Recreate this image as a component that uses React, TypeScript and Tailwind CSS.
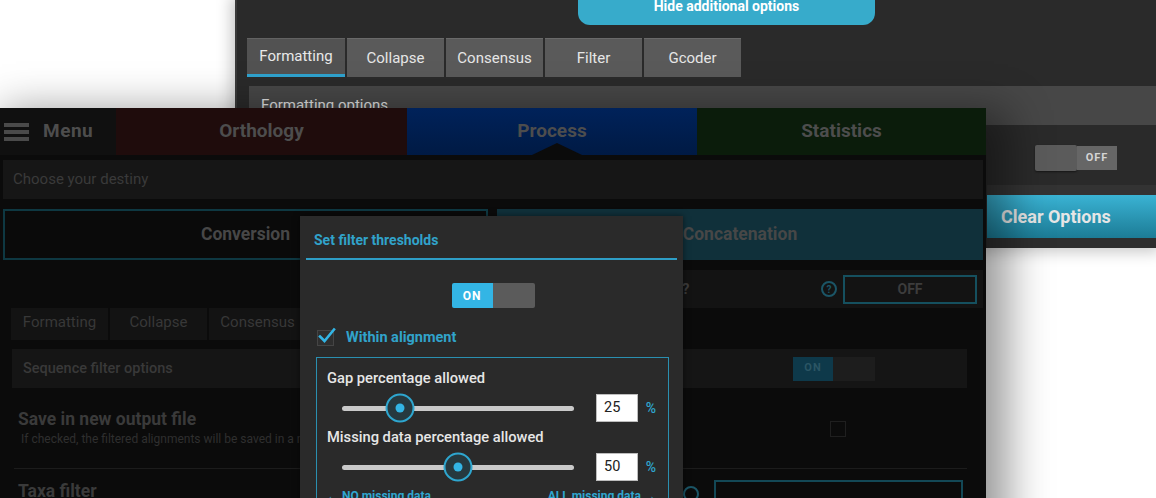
import React from "react";

function Slider({ value }: { value: number }) {
  return (
    <div className="relative w-[232px] h-[5px] rounded-full bg-[#c9c9c9]">
      <div
        className="absolute top-1/2 w-[29px] h-[29px] -translate-x-1/2 -translate-y-1/2 rounded-full border-2 border-[#2ea6cf] bg-[#26393f] flex items-center justify-center"
        style={{ left: `${value}%` }}
      >
        <div className="w-[9px] h-[9px] rounded-full bg-[#33b5e5]" />
      </div>
    </div>
  );
}

function SliderRow({ value }: { value: number }) {
  return (
    <div className="flex items-center h-[28px]">
      <div className="ml-[15px]">
        <Slider value={value} />
      </div>
      <div className="ml-[22px] w-[44px] h-[28px] bg-white border border-[#bdbdbd] text-[14.5px] leading-[26px] text-[#222] pl-[7px]">
        {value}
      </div>
      <div className="ml-[8px] text-[14px] font-medium text-[#2fa6cf]">%</div>
    </div>
  );
}

export default function App() {
  const backTabs = ["Formatting", "Collapse", "Consensus", "Filter", "Gcoder"];
  const frontTabs = ["Formatting", "Collapse", "Consensus", "Filter", "Gcoder"];
  return (
    <div className="relative w-[1156px] h-[498px] overflow-hidden bg-white font-['Roboto','Liberation_Sans',sans-serif]">
      {/* Back window */}
      <div className="absolute left-[235px] top-0 w-[921px] h-[248px] bg-[#2a2a2a] border-l-2 border-[#3a3a3a] shadow-[0_0_14px_4px_rgba(0,0,0,0.22)] flex flex-col">
        <div className="h-[25px] flex">
          <div className="w-[341px]" />
          <div className="w-[297px] h-[25px] rounded-b-[12px] bg-[#37abcb] text-white font-bold text-[14px] leading-[13px] flex justify-center">
            Hide additional options
          </div>
        </div>
        <div className="mt-[13px] pl-[10px] flex gap-[2px] h-[39px]">
          {backTabs.map((t, i) => (
            <div
              key={t}
              className={
                i === 0
                  ? "w-[98px] h-[39px] bg-[#525252] border-t border-[#626262] border-b-[3px] border-b-[#2fa3cf] text-[15px] text-[#e8e8e8] flex items-center justify-center"
                  : "w-[97px] h-[39px] bg-[#5a5a5a] border-t border-[#6a6a6a] text-[15px] text-[#e6e6e6] flex items-center justify-center"
              }
            >
              {t}
            </div>
          ))}
        </div>
        <div className="mt-[9px] ml-[12px] h-[39px] bg-[#474747] text-[15px] leading-[20px] text-[#e0e0e0] pl-[12px] pt-[9px]">
          Formatting options
        </div>
        <div className="flex-1 flex">
          <div className="flex-1" />
          <div className="w-[169px] flex flex-col">
            <div className="h-[60px] pl-[48px] pt-[20px]">
              <div className="flex w-[82px] h-[26px]">
                <div className="w-[42px] h-[26px] bg-[#5b5b5b] rounded-[2px] shadow-[0_1px_2px_rgba(0,0,0,0.5)]" />
                <div className="flex-1 mt-[1px] h-[24px] bg-[#666] text-[11px] font-bold tracking-[1px] text-[#d4d4d4] flex items-center justify-center">
                  OFF
                </div>
              </div>
            </div>
            <div className="h-[10px] bg-[#333]" />
            <div className="h-[43px] bg-gradient-to-b from-[#3ab3d4] to-[#1c7c96] text-[18px] font-bold text-[#e6e6e6] flex items-center pl-[14px]">
              Clear Options
            </div>
            <div className="flex-1 bg-[#2e2e2e]" />
          </div>
        </div>
      </div>

      {/* Front window */}
      <div className="absolute left-0 top-[108px] w-[986px] h-[420px] bg-[#0b0b0b] shadow-[12px_12px_40px_10px_rgba(0,0,0,0.4)] flex flex-col">
        <div className="relative h-[47px] flex text-[19px] font-bold text-[#4d4d4d]">
          <div className="w-[116px] bg-[#101010] flex items-center pl-[4px] gap-[14px]">
            <div className="flex flex-col gap-[3px]">
              <div className="w-[25px] h-[4px] bg-[#4a4a4a]" />
              <div className="w-[25px] h-[4px] bg-[#4a4a4a]" />
              <div className="w-[25px] h-[4px] bg-[#4a4a4a]" />
            </div>
            <span className="tracking-[0.5px]">Menu</span>
          </div>
          <div className="w-[291px] bg-[#1f0c0c] flex items-center justify-center">Orthology</div>
          <div className="w-[290px] bg-gradient-to-b from-[#00225a] to-[#001a44] flex items-center justify-center">Process</div>
          <div className="flex-1 bg-[#0b1c0b] flex items-center justify-center">Statistics</div>
          <div className="absolute left-[532px] bottom-0 w-0 h-0 border-l-[25px] border-r-[25px] border-b-[12px] border-l-transparent border-r-transparent border-b-[#0b0b0b]" />
        </div>

        <div className="mt-[5px] mx-[3px] h-[39px] bg-[#161616] text-[15px] text-[#3a3a3a] pl-[10px] flex items-center">
          Choose your destiny
        </div>

        <div className="mt-[10px] mx-[3px] h-[51px] flex gap-[9px] text-[17.5px] font-bold text-[#474747]">
          <div className="w-[485px] border-2 border-[#0e3842] bg-[#0a0a0a] flex items-center justify-center">Conversion</div>
          <div className="flex-1 bg-[#10303a] flex items-center justify-center">Concatenation</div>
        </div>

        <div className="h-[48px] flex justify-end pr-[3px]">
          <div className="w-[487px] mt-[10px] h-[38px] bg-[#131313] flex items-center">
            <span className="ml-[186px] text-[15px] font-bold text-[#3a3a3a]">?</span>
            <div className="flex-1" />
            <div className="w-[16px] h-[16px] rounded-full border-2 border-[#1b5566] text-[10px] font-bold text-[#1b5566] flex items-center justify-center">?</div>
            <div className="ml-[6px] mr-[6px] w-[134px] h-[29px] border-2 border-[#15505f] text-[14px] font-bold text-[#3c3c3c] flex items-center justify-center">
              OFF
            </div>
          </div>
        </div>

        <div className="h-[32px] pl-[11px] flex gap-[2px]">
          {frontTabs.map((t) => (
            <div key={t} className="w-[97px] h-[32px] bg-[#131313] text-[15px] text-[#383838] flex justify-center pt-[3px]">
              {t}
            </div>
          ))}
        </div>

        <div className="mt-[9px] ml-[12px] w-[955px] h-[39px] bg-[#151515] flex items-center justify-between pl-[11px]">
          <span className="text-[14.5px] font-medium text-[#393939]">Sequence filter options</span>
          <div className="mr-[92px] flex w-[82px] h-[24px]">
            <div className="w-[40px] h-[24px] bg-[#0e394a] text-[11px] font-bold tracking-[1px] text-[#2b5564] flex items-center justify-center">ON</div>
            <div className="flex-1 bg-[#1d1d1d]" />
          </div>
        </div>

        <div className="mt-[21px] pl-[18px] pr-[140px] flex items-start">
          <div className="flex-1">
            <div className="text-[17.5px] leading-[20px] font-bold text-[#3a3a3a]">Save in new output file</div>
            <div className="mt-[3px] pl-[3px] text-[12px] leading-[14px] text-[#2f2f2f]">
              If checked, the filtered alignments will be saved in a new output file
            </div>
          </div>
          <div className="mt-[12px] w-[16px] h-[16px] border border-[#1f1f1f]" />
        </div>

        <div className="mt-[22px] ml-[14px] w-[953px] h-[1px] bg-[#1c1c1c]" />

        <div className="mt-[11px] pl-[18px] pr-[23px] flex items-start">
          <div className="mt-[1px] text-[17.5px] leading-[20px] font-bold text-[#3a3a3a]">Taxa filter</div>
          <div className="flex-1" />
          <div className="mt-[6px] w-[16px] h-[16px] rounded-full border-2 border-[#1b5566]" />
          <div className="ml-[15px] w-[249px] h-[40px] border-2 border-[#134856]" />
        </div>
      </div>

      {/* Dialog */}
      <div className="absolute left-[300px] top-[216px] w-[383px] h-[300px] bg-[#2a2a2a] shadow-[0_0_6px_rgba(0,0,0,0.5)] flex flex-col">
        <div className="h-[42px] px-[14px] pt-[14px] text-[14px] leading-[20px] font-bold text-[#31a3ca]">Set filter thresholds</div>
        <div className="mx-[6px] h-[2px] bg-[#2e9ec6]" />
        <div className="mt-[23px] flex justify-center pl-[3px]">
          <div className="flex w-[83px] h-[25px] rounded-[2px] overflow-hidden">
            <div className="w-[41px] bg-[#33b5e5] text-[12px] font-bold tracking-[1px] text-white flex items-center justify-center">ON</div>
            <div className="flex-1 bg-[#5b5b5b]" />
          </div>
        </div>
        <div className="mt-[22px] pl-[17px] h-[16px] flex items-center gap-[12px]">
          <div className="relative w-[17px] h-[16px] border border-[#454545] bg-[#2f2f2f]">
            <svg className="absolute left-[0px] -top-[4px]" width="18" height="18" viewBox="0 0 18 18">
              <path d="M2 9.5 L6.5 14 L16 2.5" fill="none" stroke="#33b5e5" strokeWidth="2.6" strokeLinecap="square" />
            </svg>
          </div>
          <span className="text-[14.5px] font-bold text-[#31a3ca]">Within alignment</span>
        </div>
        <div className="mt-[11px] ml-[16px] mr-[14px] flex-1 border border-[#2a8fb0] pl-[10px] pt-[10px] pr-[12px]">
          <div className="text-[14.7px] leading-[20px] font-medium text-[#e6e6e6]">Gap percentage allowed</div>
          <div className="mt-[6px]">
            <SliderRow value={25} />
          </div>
          <div className="mt-[5px] text-[14.7px] leading-[20px] font-medium text-[#e6e6e6]">Missing data percentage allowed</div>
          <div className="mt-[6px]">
            <SliderRow value={50} />
          </div>
          <div className="mt-[8px] flex justify-between text-[12px] leading-[14px] font-bold text-[#2fa6cf]">
            <span>← NO missing data</span>
            <span>ALL missing data →</span>
          </div>
        </div>
      </div>
    </div>
  );
}
